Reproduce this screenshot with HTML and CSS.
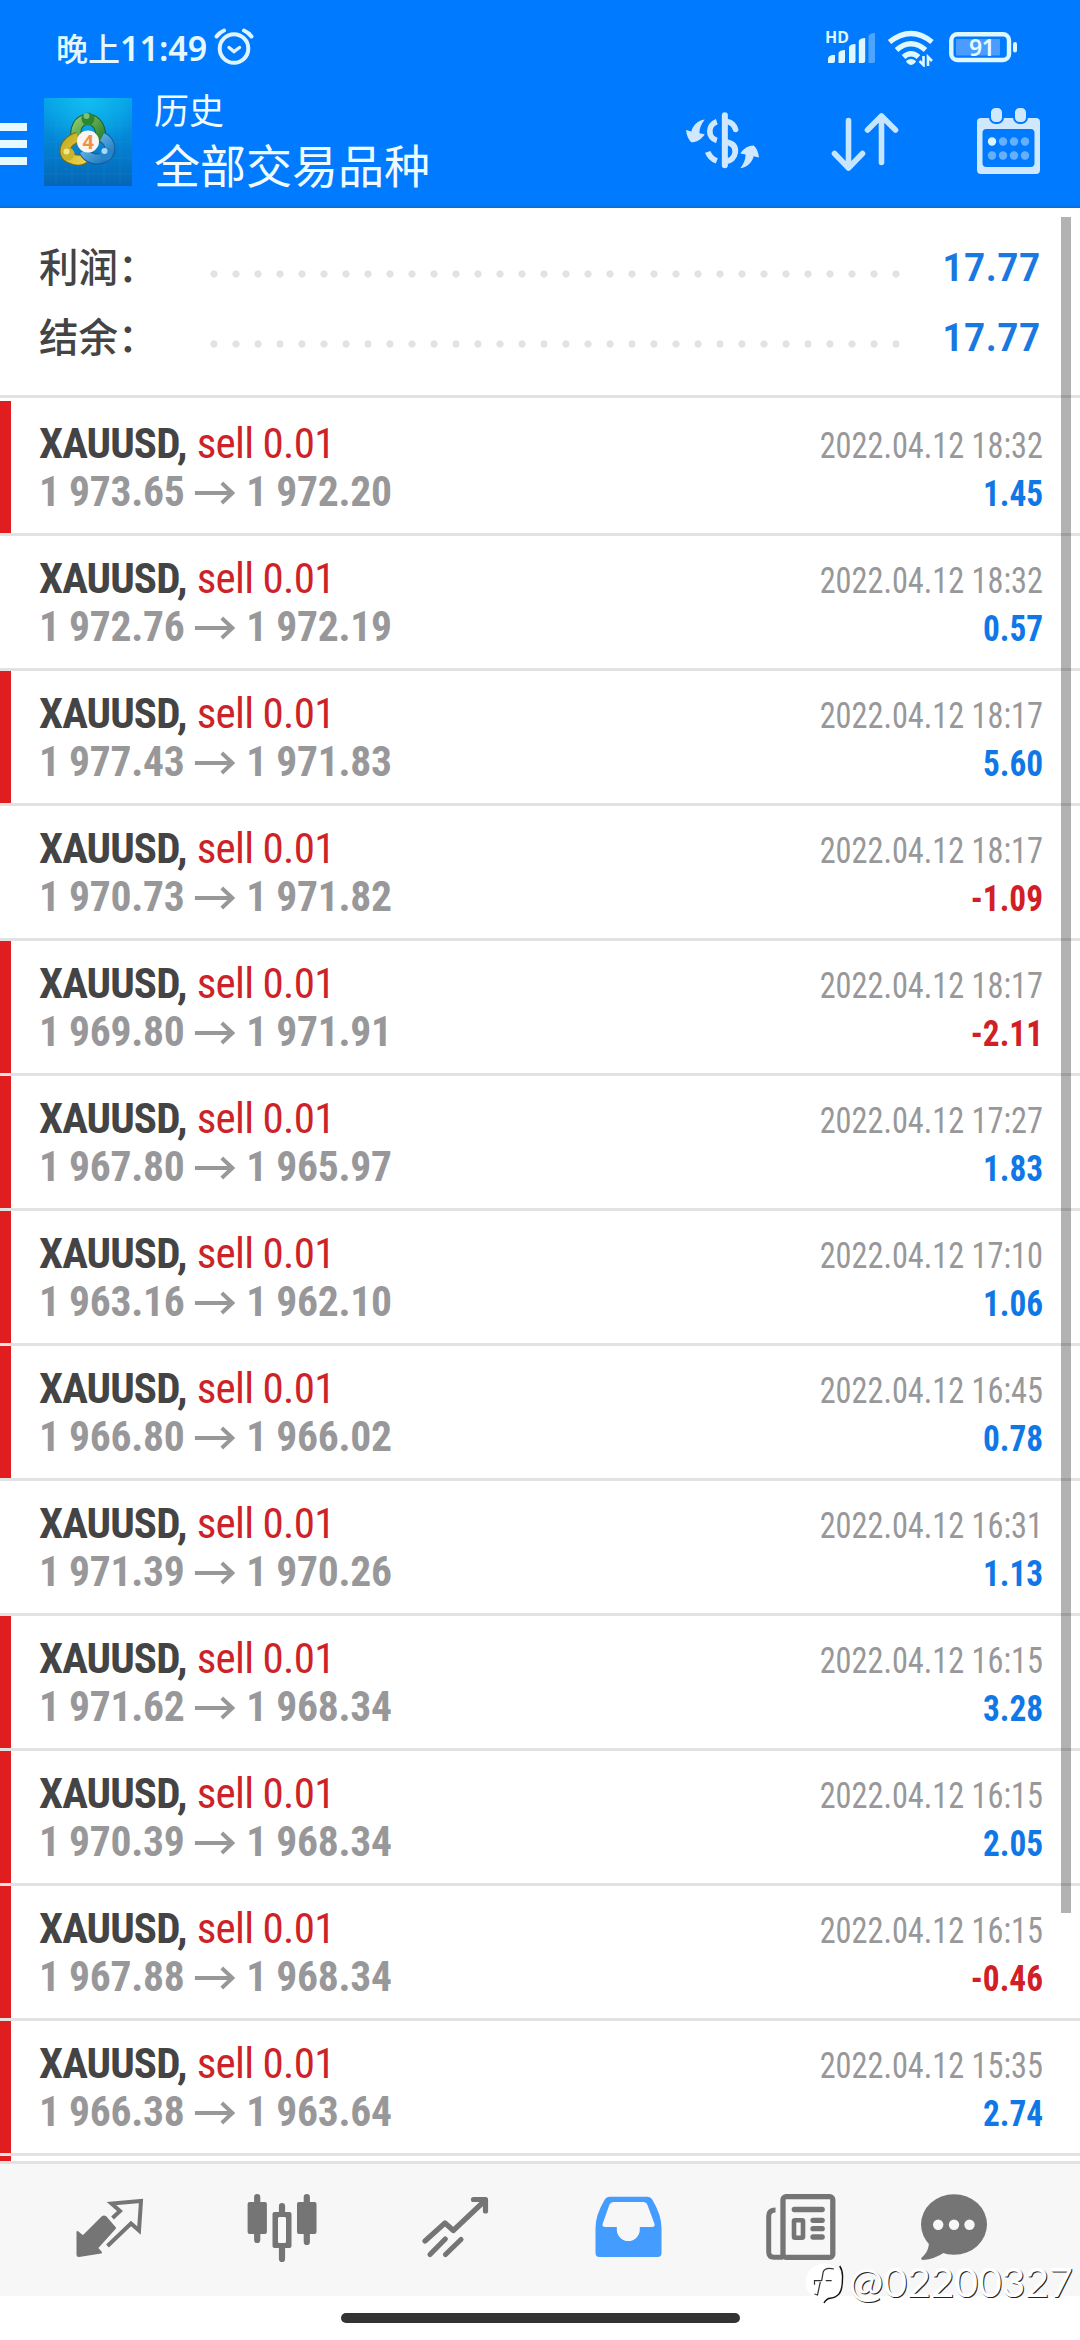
FILE: index.html
```
<!DOCTYPE html>
<html lang="zh-CN">
<head>
<meta charset="utf-8">
<title>历史</title>
<link rel="stylesheet" href="styles.css">
</head>
<body>
<svg class="defs" width="0" height="0">
  <symbol id="arrow" viewBox="0 0 42 24"><path d="M0 12H37M28 2l11 10-11 10" fill="none" stroke="currentColor" stroke-width="4"/></symbol>
</svg>
<div class="screen">
  <header class="header">
    <div class="status">
      <span class="clock">晚上<b>11:49</b></span>
      <svg class="alarm" width="40" height="38" viewBox="0 0 40 38" fill="none" stroke="#dff4ff" stroke-linecap="round"><circle cx="20" cy="20.500" r="14.300" stroke-width="4"/><path d="M2.500 8.500Q5.500 4.500 10 2.500M37.500 8.500Q34.500 4.500 30 2.500" stroke-width="4"/><path d="M15 19.500l5 4 5.500-4" stroke-width="3.400"/></svg>
      <span class="spacer"></span>
      <svg class="signals" width="200" height="48" viewBox="820 19 200 48">
        <text class="hd" x="825" y="43" textLength="24">HD</text>
        <g fill="#dff7ff"><path d="M828 63v-4q0-3 4-4h3v6q0 2-2 2zM838.500 63V53q1-3 6.500-3v11q0 2-2 2zM849 63V47q1-3 6.500-3v17q0 2-2 2zM858.800 63V41q1-3 6.400-3v23q0 2-2 2z"/><path d="M868.500 63V36q1-3 6.500-3v28q0 2-2 2z" opacity=".35"/></g>
        <g fill="none" stroke="#dff7ff" stroke-width="5.400"><path d="M889.500 42Q911 25 932 42M896.500 50Q911 37.500 925.500 50M903.500 57Q911 50.500 918.500 57"/></g>
        <path d="M906 61q5-4 10 0-1 3-5 4-4-1-5-4z" fill="#dff7ff"/>
        <path d="M923.500 56v9l-4-4M928 66v-9l4 4" fill="none" stroke="#dff7ff" stroke-width="2.600"/>
        <rect x="951.300" y="34.300" width="57.700" height="25.700" rx="6" fill="none" stroke="#dff7ff" stroke-width="4.400"/>
        <rect x="956" y="39" width="44" height="16.500" fill="#4a9dff"/>
        <rect x="1013" y="42" width="4" height="10.500" rx="2" fill="#dff7ff"/>
        <text class="level" x="969" y="56" textLength="26">91</text>
      </svg>
    </div>
    <div class="toolbar">
      <div class="menu"><i></i><i></i><i></i></div>
      <svg class="logo" width="88" height="88" viewBox="0 0 88 88">
        <defs>
          <linearGradient id="sky" x1="0" y1="0" x2="0" y2="1"><stop offset="0" stop-color="#02a1e6"/><stop offset=".5" stop-color="#0484d4"/><stop offset="1" stop-color="#0565b4"/></linearGradient>
          <radialGradient id="glow" cx=".5" cy="0" r=".6"><stop offset="0" stop-color="#12bdf0"/><stop offset="1" stop-color="#12bdf0" stop-opacity="0"/></radialGradient>
          <linearGradient id="gr" x1="0" y1="0" x2="1" y2="1"><stop offset="0" stop-color="#8ac868"/><stop offset="1" stop-color="#217a2c"/></linearGradient>
          <linearGradient id="ye" x1="0" y1="0" x2="1" y2="1"><stop offset="0" stop-color="#c7ad24"/><stop offset="1" stop-color="#e9d44c"/></linearGradient>
          <linearGradient id="bl" x1="0" y1="0" x2="1" y2="1"><stop offset="0" stop-color="#77c7ee"/><stop offset="1" stop-color="#1c76c0"/></linearGradient>
        </defs>
        <rect width="88" height="88" fill="url(#sky)"/><rect width="88" height="88" fill="url(#glow)"/>
        <path d="M12 0v88M28 0v88M44 0v88M60 0v88M76 0v88M0 12h88M0 28h88M0 44h88M0 60h88M0 76h88" stroke="#3fb4ee" stroke-opacity=".14"/>
        <g fill="none" stroke-width="9"><path d="M33 46C29 29 35 22 44 21c9 1 14 9 13 24" stroke="#17602d" stroke-width="11"/><path d="M33 46C29 29 35 22 44 21c9 1 14 9 13 24" stroke="url(#gr)"/>
        <path d="M34 39C19 44 18 57 26 60c10 5 17 1 18-8" stroke="#776f18" stroke-width="11"/><path d="M34 39C19 44 18 57 26 60c10 5 17 1 18-8" stroke="url(#ye)"/>
        <path d="M58 39C68 44 68 56 61 59c-8 4-17 2-21-6" stroke="#165b94" stroke-width="11"/><path d="M58 39C68 44 68 56 61 59c-8 4-17 2-21-6" stroke="url(#bl)"/></g>
        <circle cx="44" cy="21" r="6.500" fill="#2b8733"/><circle cx="42.500" cy="18" r="3" fill="#7dc171"/>
        <circle cx="24" cy="56" r="6.500" fill="#c9b32c"/><circle cx="22.500" cy="53.500" r="3" fill="#f2e689"/>
        <circle cx="62" cy="56" r="6.500" fill="#2584ca"/><circle cx="60.500" cy="53" r="3" fill="#a4d9f5"/>
        <circle cx="44" cy="43.500" r="11" fill="#faf5f0"/><text class="four" x="38.500" y="50.500">4</text>
      </svg>
      <div class="titles"><div class="small">历史</div><div class="big">全部交易品种</div></div>
      <span class="spacer"></span>
      <svg class="currency" width="73" height="57" viewBox="48 36 218 170" fill="none" stroke="#cfe8fd" stroke-width="17">
        <path d="M164 46V195" stroke-width="18" stroke-linecap="round"/>
        <path d="M170 64C184 67 193 75 196 88" stroke-linecap="round"/><path d="M166 125C190 129 197 142 195 157 192 173 181 182 166 184"/>
        <path d="M140 65C112 74 112 113 140 121M140 182C127 177 117 167 113 155"/>
        <path id="swoop" d="M104 58C84 60 68 76 64 94L48 90C50 108 56 120 64 126 80 126 93 118 104 102L88 99C88 84 94 70 104 58z" fill="#cfe8fd" stroke="none"/>
        <use href="#swoop" transform="rotate(180 157 131)"/>
      </svg>
      <svg class="sort" width="68" height="60" viewBox="831 112 68 60" fill="none" stroke="#c6e5ff" stroke-width="5.600" stroke-linecap="round" stroke-linejoin="round"><path d="M848.500 120.500V168M834.500 153.500l14 14.500 14-14.500M881.500 162.500V116M867.500 130l14-14 14 14"/></svg>
      <svg class="calendar" width="64" height="68" viewBox="977 107 64 68">
        <path fill="#cfe8fd" fill-rule="evenodd" d="M981 118h55q4 0 4 4v48q0 4-4 4h-55q-4 0-4-4v-48q0-4 4-4zM986.500 129q-4 0-4 4v30q0 4 4 4h44q4 0 4-4v-30q0-4-4-4z"/>
        <g fill="#cfe8fd" stroke="#007aff" stroke-width="2"><rect x="990" y="107" width="13" height="16" rx="5.500"/><rect x="1014" y="107" width="13" height="16" rx="5.500"/></g>
        <circle cx="992" cy="141.500" r="4.200" fill="#d9f3ff"/><g fill="#66b0fb"><circle cx="1003" cy="141.500" r="4.200"/><circle cx="1014" cy="141.500" r="4.200"/><circle cx="1025" cy="141.500" r="4.200"/><circle cx="992" cy="155.500" r="4.200"/><circle cx="1003" cy="155.500" r="4.200"/><circle cx="1014" cy="155.500" r="4.200"/><circle cx="1025" cy="155.500" r="4.200"/></g>
      </svg>
    </div>
  </header>

  <main class="history">
    <section class="summary">
      <div class="total"><span class="label">利润：</span><span class="dots"></span><span class="sum">17.77</span></div>
      <div class="total"><span class="label">结余：</span><span class="dots"></span><span class="sum">17.77</span></div>
    </section>
    <div class="deals">
      <article class="deal marked"><div class="line"><span class="symbol">XAUUSD, <em>sell 0.01</em></span><time>2022.04.12 18:32</time></div><div class="line"><span class="price">1 973.65<svg class="to"><use href="#arrow"/></svg>1 972.20</span><span class="profit">1.45</span></div></article>
      <article class="deal"><div class="line"><span class="symbol">XAUUSD, <em>sell 0.01</em></span><time>2022.04.12 18:32</time></div><div class="line"><span class="price">1 972.76<svg class="to"><use href="#arrow"/></svg>1 972.19</span><span class="profit">0.57</span></div></article>
      <article class="deal marked"><div class="line"><span class="symbol">XAUUSD, <em>sell 0.01</em></span><time>2022.04.12 18:17</time></div><div class="line"><span class="price">1 977.43<svg class="to"><use href="#arrow"/></svg>1 971.83</span><span class="profit">5.60</span></div></article>
      <article class="deal"><div class="line"><span class="symbol">XAUUSD, <em>sell 0.01</em></span><time>2022.04.12 18:17</time></div><div class="line"><span class="price">1 970.73<svg class="to"><use href="#arrow"/></svg>1 971.82</span><span class="profit loss">-1.09</span></div></article>
      <article class="deal marked"><div class="line"><span class="symbol">XAUUSD, <em>sell 0.01</em></span><time>2022.04.12 18:17</time></div><div class="line"><span class="price">1 969.80<svg class="to"><use href="#arrow"/></svg>1 971.91</span><span class="profit loss">-2.11</span></div></article>
      <article class="deal marked"><div class="line"><span class="symbol">XAUUSD, <em>sell 0.01</em></span><time>2022.04.12 17:27</time></div><div class="line"><span class="price">1 967.80<svg class="to"><use href="#arrow"/></svg>1 965.97</span><span class="profit">1.83</span></div></article>
      <article class="deal marked"><div class="line"><span class="symbol">XAUUSD, <em>sell 0.01</em></span><time>2022.04.12 17:10</time></div><div class="line"><span class="price">1 963.16<svg class="to"><use href="#arrow"/></svg>1 962.10</span><span class="profit">1.06</span></div></article>
      <article class="deal marked"><div class="line"><span class="symbol">XAUUSD, <em>sell 0.01</em></span><time>2022.04.12 16:45</time></div><div class="line"><span class="price">1 966.80<svg class="to"><use href="#arrow"/></svg>1 966.02</span><span class="profit">0.78</span></div></article>
      <article class="deal"><div class="line"><span class="symbol">XAUUSD, <em>sell 0.01</em></span><time>2022.04.12 16:31</time></div><div class="line"><span class="price">1 971.39<svg class="to"><use href="#arrow"/></svg>1 970.26</span><span class="profit">1.13</span></div></article>
      <article class="deal marked"><div class="line"><span class="symbol">XAUUSD, <em>sell 0.01</em></span><time>2022.04.12 16:15</time></div><div class="line"><span class="price">1 971.62<svg class="to"><use href="#arrow"/></svg>1 968.34</span><span class="profit">3.28</span></div></article>
      <article class="deal marked"><div class="line"><span class="symbol">XAUUSD, <em>sell 0.01</em></span><time>2022.04.12 16:15</time></div><div class="line"><span class="price">1 970.39<svg class="to"><use href="#arrow"/></svg>1 968.34</span><span class="profit">2.05</span></div></article>
      <article class="deal marked"><div class="line"><span class="symbol">XAUUSD, <em>sell 0.01</em></span><time>2022.04.12 16:15</time></div><div class="line"><span class="price">1 967.88<svg class="to"><use href="#arrow"/></svg>1 968.34</span><span class="profit loss">-0.46</span></div></article>
      <article class="deal marked"><div class="line"><span class="symbol">XAUUSD, <em>sell 0.01</em></span><time>2022.04.12 15:35</time></div><div class="line"><span class="price">1 966.38<svg class="to"><use href="#arrow"/></svg>1 963.64</span><span class="profit">2.74</span></div></article>
      <article class="deal marked"></article>
    </div>
    <div class="scrollbar"></div>
  </main>

  <nav class="tabs">
    <svg viewBox="0 0 80 80"><path d="M8.500 42l5.500 4.500L33.500 27q1.500-1 3 0L46 38 28 58l4 4.500L10 66q-1.500 0-1.500-1.500z" fill="currentColor" stroke="currentColor" stroke-width="2" stroke-linejoin="round"/><path d="M43.500 28l7.500-7L42.500 13.500 72 11 70 40.500 62 33.500 38.500 56" fill="none" stroke="currentColor" stroke-width="4"/></svg>
    <svg viewBox="0 0 80 80" fill="currentColor"><rect x="5.600" y="12" width="19.300" height="32" rx="2"/><rect x="55" y="12" width="19.500" height="32" rx="2"/><path fill-rule="evenodd" d="M32.500 22h15q2 0 2 2v32q0 2-2 2h-15q-2 0-2-2V24q0-2 2-2zM37 27q-1 0-1 1.500v23q0 1.500 1 1.500h6q1 0 1-1.500v-23Q44 27 43 27z"/><path d="M15.200 7v43M40 16v6M40 58v11M64.800 7v45" stroke="currentColor" stroke-width="6.200" stroke-linecap="round"/></svg>
    <svg viewBox="0 0 80 80" fill="none" stroke="currentColor" stroke-width="5.200" stroke-linecap="round" stroke-linejoin="round"><path d="M10 51l20-18 8.300 7.500L70 10.500M58.500 9.500h12V21M15 64.500l15.300-15.500M30.500 64.500l15.500-15"/></svg>
    <svg class="active" viewBox="0 0 80 80" fill="currentColor"><path fill-rule="evenodd" d="M22 6.700H59Q62.500 6.700 64.500 10 73.500 25 73.500 38V63q0 4-4 4h-58q-4 0-4-4V38Q7.500 25 16.500 10 18.500 6.700 22 6.700zM26 12Q22.500 12 21.300 15L14.600 34Q14 37 17 37H28.800v2.500A11.500 11.500 0 0 0 51.800 39.500V37H64Q67.300 37 66.500 34L59.500 15Q58.500 12 55 12z"/></svg>
    <svg viewBox="0 0 80 80" fill="none" stroke="currentColor" stroke-width="5.300" stroke-linecap="round"><rect x="22" y="6.700" width="49.800" height="60.600" rx="3"/><path d="M14.500 20Q7.700 20 7.700 26V62q0 5.300 5.300 5.300H22" stroke-width="5" stroke-linecap="butt"/><path d="M33.300 19.500H61.200M52 30.300h9.200M52 38.700h9.200M52 47h9.200"/><rect x="33" y="30.300" width="9" height="17.400" rx="1" stroke-width="4.600"/></svg>
    <svg viewBox="0 0 80 80" fill="currentColor"><ellipse cx="40" cy="34.500" rx="33" ry="30.300"/><path d="M15 50C15.500 60 11 65 7.200 68Q6.800 70 9 70 21 69 31 62z"/><g fill="#f7f7f7"><circle cx="24.200" cy="34.700" r="5.200"/><circle cx="40" cy="34.700" r="5.200"/><circle cx="55.500" cy="34.700" r="5.200"/></g></svg>
  </nav>
  <footer class="gesture"><i></i></footer>

  <div class="watermark">
    <svg width="44" height="42" viewBox="0 0 44 42"><circle cx="19" cy="19" r="18.500" fill="#fff"/><path d="M34.700 3Q38 8 37.500 15 37.500 27 34 31 30 35 25 35.300 21 36 19 40" fill="none" stroke="#111" stroke-width="1.400"/><path d="M29 6Q20 4 18.200 9L16.700 17.700H9.500v4M20.700 17.700h6M15.300 19L12.500 32l-3-1" fill="none" stroke="#333" stroke-width="1.200"/></svg>
    <span>@02200327</span>
  </div>
</div>
</body>
</html>
```
FILE: styles.css
```
* { box-sizing: border-box; }
body { margin: 0; background: #fff; }
.defs { position: absolute; }
.screen {
  position: relative;
  display: flex;
  flex-direction: column;
  width: 1080px;
  height: 2340px;
  overflow: hidden;
  background: #fff;
  font-family: "Roboto Condensed", Roboto, "Noto Sans CJK SC", sans-serif;
}
.spacer { flex: 1; }

/* header */
.header {
  height: 208px;
  background: #007aff;
  border-bottom: 2px solid #0872dc;
  color: #f0fbff;
}
.status { display: flex; align-items: flex-start; height: 96px; padding: 28px 60px 0 56px; }
.clock {
  width: 158px;
  font: 500 32px/38px "Noto Sans CJK SC", sans-serif;
  color: #e4f8ff;
  white-space: nowrap;
}
.clock b { font-family: "Noto Sans", sans-serif; font-weight: 600; font-size: 34px; letter-spacing: 0; }
.signals { margin-top: -9px; }
.hd { font: 700 16px "Noto Sans", sans-serif; fill: #dff7ff; }
.level { font: 600 23px "Noto Sans", sans-serif; fill: #e6faff; }
.four { font: 700 20px "Open Sans", sans-serif; fill: #f0914a; }
.toolbar { display: flex; align-items: flex-start; height: 110px; padding-right: 39px; }
.menu { display: flex; flex-direction: column; gap: 9px; width: 27px; margin: 27px 17px 0 0; }
.menu i { height: 8px; background: #e6f9ff; }
.logo { margin: 2px 22px 0 0; }
.titles { font-family: "Noto Sans CJK SC", sans-serif; font-weight: 400; white-space: nowrap; }
.small { font-size: 35px; line-height: 40px; margin-top: -7px; }
.big { font-size: 46px; line-height: 60px; margin-top: 4px; }
.currency { margin: 16px 72px 0 0; }
.sort { margin: 16px 78px 0 0; }
.calendar { margin-top: 11px; }

/* history list */
.history { position: relative; height: 1953px; overflow: hidden; }
.summary { height: 190px; padding: 31px 39px 0 39px; border-bottom: 3px solid #e2e2e2; }
.total { display: flex; align-items: center; height: 70px; }
.label {
  width: 171px;
  margin-bottom: 18px;
  font: 500 39.500px/52px "Noto Sans CJK SC", sans-serif;
  color: #444;
}
.dots {
  width: 704px;
  height: 8px;
  background: radial-gradient(circle at 4px 4px, #e2e2e2 3.200px, transparent 4px) 0 0 / 22px 8px;
}
.sum {
  flex: 1;
  margin-bottom: 12px;
  text-align: right;
  font-family: Roboto, sans-serif;
  font-weight: 700;
  font-size: 39px;
  line-height: 48px;
  letter-spacing: 1px;
  color: #1a78e0;
  transform: scaleX(.93);
  transform-origin: right;
}
.deals { padding-top: 3px; }
.deal {
  height: 135px;
  padding: 18px 37px 0 39px;
  border-bottom: 3px solid #e2e2e2;
}
.marked { box-shadow: inset 11px 0 #e01e20; }
.line { display: flex; justify-content: space-between; align-items: baseline; height: 48px; line-height: 48px; white-space: nowrap; }
.symbol { font-size: 43px; font-weight: 700; letter-spacing: -.9px; color: #444; }
.symbol em { margin-left: 1px; font-style: normal; font-weight: 400; letter-spacing: -.7px; color: #cd2227; }
.price { font-size: 43px; font-weight: 700; letter-spacing: -.3px; color: #98989a; transform: scaleX(.967); transform-origin: left; }
.to { width: 42px; height: 24px; margin: 0 11px 1px; }
time { font-size: 36px; color: #98989a; transform: scaleX(.897); transform-origin: right; }
.profit { font-size: 36px; font-weight: 700; color: #0f78e6; transform: scaleX(.925); transform-origin: right; }
.loss { color: #d02026; }
.scrollbar { position: absolute; top: 9px; right: 9px; width: 10px; height: 1696px; background: rgba(0, 0, 0, .3); }

/* bottom tabs */
.tabs {
  display: grid;
  grid-template-columns: repeat(5, 173.200px) 132px;
  justify-items: center;
  height: 135px;
  padding: 26px 0 0 22px;
  border-top: 3px solid #e2e2e2;
  background: #f7f7f7;
  color: #757575;
}
.tabs svg { width: 80px; height: 80px; }
.tabs .active { color: #449cff; }
.gesture { display: flex; justify-content: center; padding-top: 17px; }
.gesture i { width: 399px; height: 10px; border-radius: 5px; background: #333; }

.watermark {
  position: absolute;
  left: 805px;
  top: 2263px;
  display: flex;
  color: #fff;
  font: 400 41px/37px Lato, sans-serif;
  letter-spacing: -.1px;
  text-shadow: 1px 1px 0 #222;
}
```
